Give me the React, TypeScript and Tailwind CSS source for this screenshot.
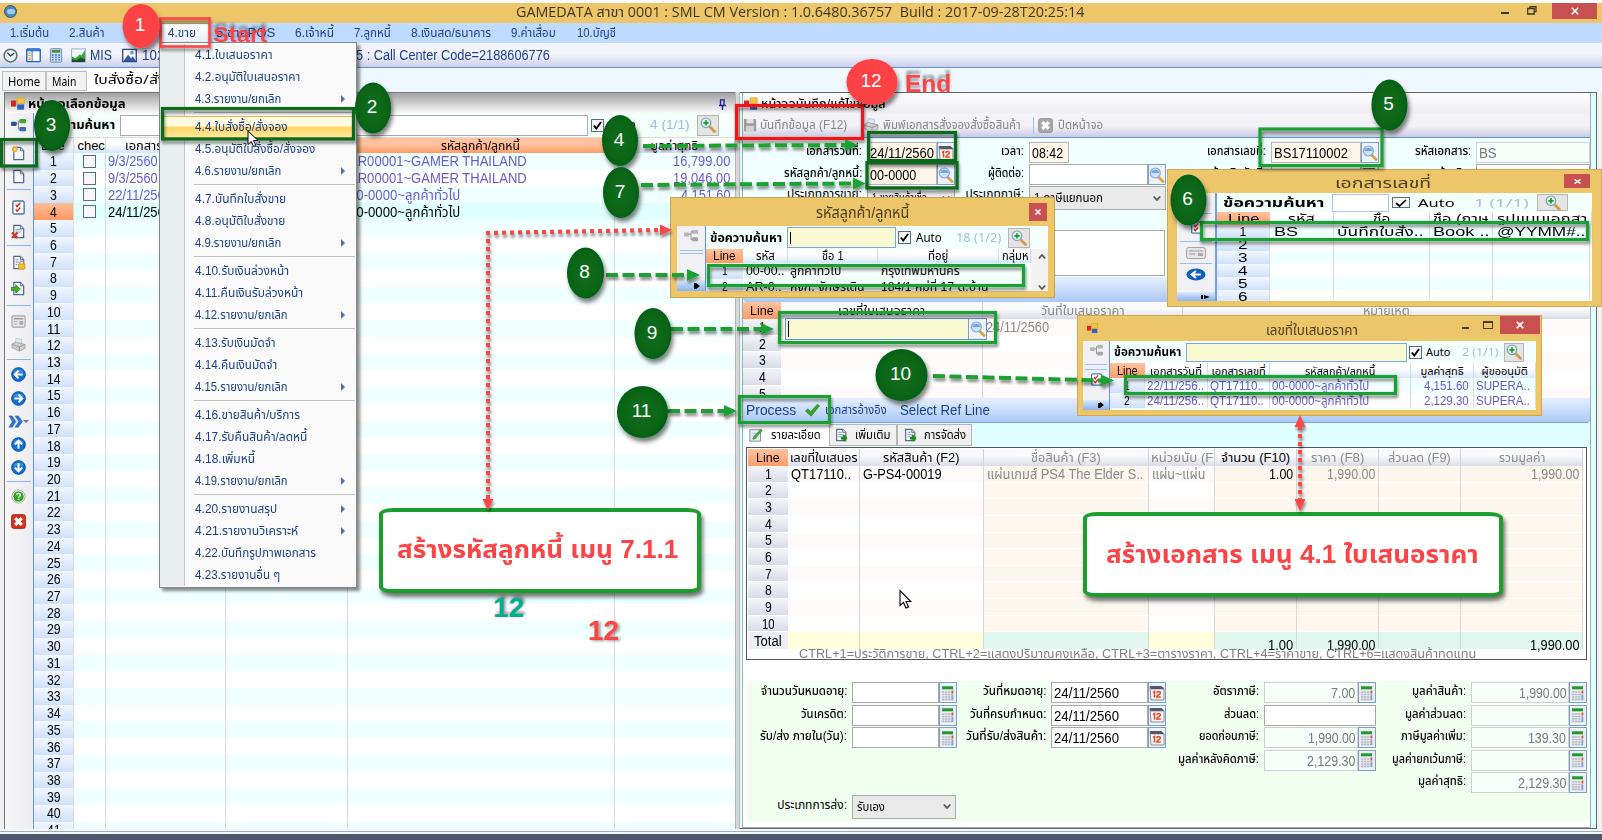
import React, { useLayoutEffect, useRef, useState } from 'react';

type Align = 'l' | 'c' | 'r';

/* Single-line label that is condensed or widened to a given width. */
function Fit({ w, c = '', a = 'l', children }: { w: number; c?: string; a?: Align; children: React.ReactNode }) {
  const ref = useRef<HTMLSpanElement>(null);
  const [s, setS] = useState(1);
  useLayoutEffect(() => {
    if (ref.current && ref.current.offsetWidth) setS(w / ref.current.offsetWidth);
  }, [w, children]);
  return (
    <span className={`inline-flex shrink-0 ${a === 'r' ? 'justify-end' : ''}`} style={{ width: w }}>
      <span
        ref={ref}
        className={`inline-block shrink-0 whitespace-pre leading-[16px] ${a === 'r' ? 'origin-right' : 'origin-left'} ${c}`}
        style={{ transform: `scaleX(${s})` }}
      >
        {children}
      </span>
    </span>
  );
}

/* ---------- icons ---------- */
const Svg = ({ s = 16, children }: { s?: number; children: React.ReactNode }) => (
  <svg width={s} height={s} viewBox="0 0 16 16" className="shrink-0">{children}</svg>
);
const Doc = ({ dim }: { dim?: boolean }) => (
  <>
    <path d="M3 1.5h7l3.5 3.5v9.5H3z" fill="#f4f7fd" stroke={dim ? '#9a9a9a' : '#55698f'} strokeWidth="1.3" />
    <path d="M10 1.5V5h3.5" fill="#cfdaf0" stroke={dim ? '#9a9a9a' : '#55698f'} strokeWidth="1" />
  </>
);
function Icon({ n, s }: { n: string; s?: number }) {
  switch (n) {
    case 'tree':
    case 'treeGray': {
      const g = n === 'treeGray';
      return (
        <Svg s={s}>
          <path d="M5 6h3M8 3v9M8 3h2M8 12h2" stroke="#888" fill="none" />
          <rect x="0" y="4" width="6" height="4.5" rx="1" fill={g ? '#b5b5b5' : '#26539c'} />
          <rect x="9" y="1" width="7" height="4.5" rx="1" fill={g ? '#b5b5b5' : '#3fa72e'} />
          <rect x="9" y="9.5" width="7" height="4.5" rx="1" fill={g ? '#a5a5a5' : '#3b67b4'} />
        </Svg>
      );
    }
    case 'new':
      return <Svg s={s}><Doc /><circle cx="4" cy="3.5" r="3" fill="#ff9d2e" /><circle cx="4" cy="3.5" r="1.3" fill="#ffe27a" /></Svg>;
    case 'doc':
      return <Svg s={s}><Doc /></Svg>;
    case 'check':
      return (
        <Svg s={s}>
          <rect x="2" y="1" width="12" height="14" rx="1.5" fill="#fff" stroke="#4379b8" strokeWidth="1.5" />
          <path d="M5 5l1.5 2L10 3M5 10l1.5 2L10 8" stroke="#d22" strokeWidth="1.5" fill="none" />
        </Svg>
      );
    case 'delete':
      return <Svg s={s}><Doc /><path d="M5 6h6M5 8.5h6" stroke="#7d90b5" /><path d="M1 9l6 6M7 9l-6 6" stroke="#d8341c" strokeWidth="2.4" /></Svg>;
    case 'lock':
      return (
        <Svg s={s}>
          <Doc /><path d="M5 5h3M5 7.5h4M5 10h2" stroke="#7d90b5" />
          <path d="M9.5 10V8.500a2 2 0 0 1 4 0V10" fill="none" stroke="#a88" strokeWidth="1.200" />
          <rect x="8" y="9.500" width="7" height="5.500" rx="1" fill="#f5c21b" stroke="#b8860b" strokeWidth=".6" />
        </Svg>
      );
    case 'export':
      return <Svg s={s}><Doc /><path d="M0 7h5V4l5 4.500-5 4.500v-3H0z" fill="#3db52c" stroke="#237a17" strokeWidth=".7" /></Svg>;
    case 'form':
      return (
        <Svg s={s}>
          <rect x="1" y="2" width="14" height="12" rx="1.500" fill="#e6e6e6" stroke="#a5a5a5" strokeWidth="1.200" />
          <path d="M3 5h10" stroke="#999" strokeWidth="1.500" /><path d="M3 8h4M3 10.500h4" stroke="#aaa" /><rect x="9" y="7.500" width="4" height="4" fill="#aaa" />
        </Svg>
      );
    case 'print':
      return (
        <Svg s={s}>
          <path d="M4 7l1.500-5.500 6 1L11 7z" fill="#dceaf8" stroke="#a9b4c0" strokeWidth=".7" />
          <path d="M1 7.500l4-2 10 2.500v4l-6 3-8-3.500z" fill="#cfcfcf" stroke="#999" strokeWidth=".8" />
          <path d="M1 8l8 2.500 6-2.500M9 10.500V15" stroke="#8a8a8a" strokeWidth=".8" fill="none" />
        </Svg>
      );
    case 'left':
    case 'right':
    case 'up':
    case 'down': {
      const r = n === 'left' ? 0 : n === 'up' ? 90 : n === 'right' ? 180 : 270;
      return (
        <Svg s={s}>
          <circle cx="8" cy="8" r="7.300" fill="#0c6fd6" stroke="#0a489b" strokeWidth="1" />
          <path d="M2.500 6a6 5 0 0 1 11 0z" fill="#4ea3f2" opacity=".7" />
          <path transform={`rotate(${r} 8 8)`} d="M12.500 8H4.500M8 4L4 8l4 4" stroke="#fff" strokeWidth="2.200" fill="none" />
        </Svg>
      );
    }
    case 'help':
      return (
        <Svg s={s}>
          <circle cx="8" cy="8" r="7" fill="#fff" stroke="#a9a9a9" /><circle cx="8" cy="8" r="5.600" fill="#2fa81f" />
          <path d="M6 6.500c0-2.500 4-2.500 4 0 0 1.500-2 1.300-2 2.800M8 10.300v1.400" stroke="#fff" strokeWidth="1.500" fill="none" />
        </Svg>
      );
    case 'exit':
    case 'exitGray':
      return (
        <Svg s={s}>
          <rect x=".7" y=".7" width="14.600" height="14.600" rx="2" fill={n === 'exit' ? '#d9321a' : '#a8a8a8'} stroke={n === 'exit' ? '#a51d0b' : '#909090'} />
          <path d="M4.500 4.500l7 7M11.500 4.500l-7 7" stroke="#fff" strokeWidth="3.400" />
        </Svg>
      );
    case 'clock':
      return (
        <Svg s={s}>
          <circle cx="8" cy="8" r="6.800" fill="#e6f2f5" stroke="#5a6b70" strokeWidth="1.600" />
          <path d="M4.500 5L8 8.500 12 5.500" stroke="#333" strokeWidth="1.300" fill="none" />
        </Svg>
      );
    case 'layout':
      return (
        <Svg s={s}>
          <rect x=".8" y="1" width="14.400" height="13.500" rx="1" fill="#fff" stroke="#1c63c0" strokeWidth="1.500" />
          <path d="M1 2.500h14" stroke="#2878dc" strokeWidth="2" /><path d="M6.500 3v11" stroke="#1c63c0" />
          <path d="M2.500 5.500h2.500M2.500 8h2.500M2.500 10.500h2.500M2.500 12.500h2.500" stroke="#e59a2a" strokeWidth="1.300" />
        </Svg>
      );
    case 'calcBlue':
      return (
        <Svg s={s}>
          <rect x="1.500" y=".7" width="12" height="14.500" rx="1" fill="#c8dcf2" stroke="#6d8db5" />
          <rect x="3" y="2" width="9" height="3" fill="#4b8a52" />
          <path d="M3 7.500h9M3 10h9M3 12.700h9" stroke="#4477b5" strokeWidth="1.500" strokeDasharray="2 1.400" />
        </Svg>
      );
    case 'chart':
      return (
        <Svg s={s}>
          <rect x=".7" y="1" width="14.500" height="14" fill="#f5f9ff" stroke="#8fa5c5" />
          <path d="M1 14V9l4 2 4-4 2 1 4-6v12z" fill="#35ab2d" /><path d="M1 15v-3l5 1 4-3 5 2v3z" fill="#1a4d38" />
        </Svg>
      );
    case 'picture':
      return (
        <Svg s={s}>
          <rect x=".8" y="1.500" width="14.400" height="13" fill="#fff" stroke="#27457f" strokeWidth="1.400" />
          <circle cx="10.500" cy="5" r="2" fill="#5b9ce6" /><path d="M1.500 14l5-7 3 4 2-2 3.500 5z" fill="#2f5ba5" />
        </Svg>
      );
    case 'lens':
      return (
        <Svg s={s}>
          <path d="M10 10.500l4 4" stroke="#e0a33c" strokeWidth="2.800" strokeLinecap="round" />
          <circle cx="6.300" cy="6" r="5" fill="#c9e4fb" stroke="#8fa9d6" strokeWidth="1.200" />
          <path d="M2.200 6a4.200 4.200 0 0 1 8.200 0z" fill="#4f93de" opacity=".75" />
        </Svg>
      );
    case 'zoom':
      return (
        <Svg s={s}>
          <path d="M9.500 9.500l5 5" stroke="#d79a48" strokeWidth="2.800" strokeLinecap="round" />
          <circle cx="6" cy="5.800" r="4.800" fill="#d9f2ea" stroke="#7aa5b5" strokeWidth="1.200" /><path d="M6 3.200v5.200M3.400 5.800h5.200" stroke="#23952b" strokeWidth="1.700" />
        </Svg>
      );
    case 'calc':
      return (
        <Svg s={s}>
          <rect width="16" height="16" fill="#ececf0" /><rect x="2" y="1.300" width="11" height="3" fill="#1f9a2c" />
          <path d="M2 7h11M2 9.500h11M2 12h11M2 14.300h11" stroke="#b4b8c8" strokeWidth="1.700" strokeDasharray="2.400 .6" /><path d="M12.500 5.500v3" stroke="#e3502f" strokeWidth="1.600" /><path d="M12.500 10v5" stroke="#7fa3dd" strokeWidth="1.600" />
        </Svg>
      );
    case 'cal':
      return (
        <Svg s={s}>
          <path d="M1 1.500h11l3 2V15H2z" fill="#f7f4f4" stroke="#8b8b95" /><path d="M.8 1h11.500l3 3.300H1.500z" fill="#54586a" />
          <path d="M4 7.500l1.500-1v6M7.800 8c0-2 3.600-2 3.600 0 0 1.500-3.400 2-3.600 4h4" stroke="#f0461c" strokeWidth="1.500" fill="none" />
        </Svg>
      );
    case 'app':
      return (
        <Svg s={s}>
          <rect x="7" y="1" width="8" height="6.500" fill="#f6c33a" stroke="#c8921a" strokeWidth=".6" /><rect x="7" y="8.500" width="8" height="6" fill="#2f62c8" /><rect x="0" y="4" width="6" height="7" fill="#d5291f" />
        </Svg>
      );
    case 'save':
      return <Svg s={s}><path d="M1 1h13l1 1v13H1z" fill="#9c9c9c" /><rect x="4" y="1" width="8" height="5" fill="#e3e3e3" /><rect x="3.500" y="9" width="9" height="6" fill="#d3d3d3" /></Svg>;
    case 'edit':
      return <Svg s={s}><rect x="1" y="2" width="12" height="13" fill="#eef3fb" stroke="#6580a8" /><path d="M3 6h6M3 9h5M3 12h6" stroke="#9fb3d0" /><path d="M13.500 1L15 3 7 12l-2.500 1L5.500 10z" fill="#38b12f" stroke="#1c7514" strokeWidth=".6" /></Svg>;
    case 'add':
      return <Svg s={s}><Doc /><path d="M5 5h4M5 7.500h6M5 10h3" stroke="#8ea3c8" /><path d="M11.500 8v7M8 11.500h7" stroke="#1c8f14" strokeWidth="3" /></Svg>;
    case 'tick':
      return <Svg s={s}><path d="M.5 8.500L3 6l3 3.500L13 1.500l2.500 1.500L6.500 14z" fill="#34a524" stroke="#1f7a14" strokeWidth=".7" /></Svg>;
    case 'ff':
      return <Svg s={s}><path d="M1 2h3.500l4 6-4 6H1l3.500-6zM7.500 2H11l4.500 6-4.500 6H7.500l4-6z" fill="#2b78d0" stroke="#1a529a" strokeWidth=".5" /></Svg>;
    default:
      return null;
  }
}

const TitleIcon = () => <Icon n="app" s={14} />;

/* ---------- menu bar ---------- */
const menus: [string, number, number][] = [
  ['1.เริ่มต้น', 59, 39], ['2.สินค้า', 59, 36], ['3.', 40, 10], ['4.ขาย', 48, 28], ['5.ขายPOS', 79, 59],
  ['6.เจ้าหนี้', 59, 39], ['7.ลูกหนี้', 57, 37], ['8.เงินสด/ธนาคาร', 100, 80], ['9.ค่าเสื่อม', 66, 45], ['10.บัญชี', 50, 39],
];

const dropItems: (null | [string, number, boolean?])[] = [
  ['4.1.ใบเสนอราคา', 78], ['4.2.อนุมัติใบเสนอราคา', 105], ['4.3.รายงาน/ยกเลิก', 86, true], null,
  ['4.4.ใบสั่งซื้อ/สั่งจอง', 93], ['4.5.อนุมัติใบสั่งซื้อ/สั่งจอง', 120], ['4.6.รายงาน/ยกเลิก', 86, true], null,
  ['4.7.บันทึกใบสั่งขาย', 91], ['4.8.อนุมัติใบสั่งขาย', 90], ['4.9.รายงาน/ยกเลิก', 86, true], null,
  ['4.10.รับเงินล่วงหน้า', 94], ['4.11.คืนเงินรับล่วงหน้า', 108], ['4.12.รายงาน/ยกเลิก', 93, true], null,
  ['4.13.รับเงินมัดจำ', 81], ['4.14.คืนเงินมัดจำ', 82], ['4.15.รายงาน/ยกเลิก', 93, true], null,
  ['4.16.ขายสินค้า/บริการ', 105], ['4.17.รับคืนสินค้า/ลดหนี้', 112], ['4.18.เพิ่มหนี้', 60], ['4.19.รายงาน/ยกเลิก', 93, true], null,
  ['4.20.รายงานสรุป', 82, true], ['4.21.รายงานวิเคราะห์', 103, true], ['4.22.บันทึกรูปภาพเอกสาร', 121], ['4.23.รายงานอื่น ๆ', 85],
];

function DropMenu() {
  return (
    <div className="absolute left-[159px] top-[42px] w-[198px] border border-[#868686] bg-[#fafafa] py-px text-[13px] text-[#1c3f8c] shadow-[3px_3px_3px_rgba(0,0,0,0.45)]">
      {dropItems.map((it, i) =>
        it === null ? (
          <div key={i} className="flex h-[6px]">
            <div className="w-[25px] border-r border-[#c5c5c5] bg-[#e9eeee]" />
            <div className="ml-[9px] mr-px mt-[2px] h-px flex-1 bg-[#c0c0c0]" />
          </div>
        ) : (
          <div key={i} className="flex h-[22px]">
            <div className="w-[25px] border-r border-[#c5c5c5] bg-[#e9eeee]" />
            <div className={`relative flex flex-1 items-center pl-[10px] ${i === 4 ? '-ml-[22px] mr-px border border-[#e3b84e] bg-linear-to-b from-[#fffbe0] from-45% via-[#ffd564] via-50% to-[#ffe79b] pl-[31px]!' : ''}`}>
              <Fit w={it[1]}>{it[0]}</Fit>
              {it[2] && <div className="ml-auto mr-[11px] border-y-[4px] border-l-[4px] border-y-transparent border-l-[#5a6db0]" />}
            </div>
          </div>
        ),
      )}
    </div>
  );
}

/* ---------- left list ---------- */
const sideIcons: (string | null)[] = ['tree', 'new', 'doc', null, 'check', 'delete', null, 'lock', 'export', null, 'form', 'print', null, 'left', 'right', 'ff', 'up', 'down', null, 'help', 'exit'];
const sideH = ['h-[24px]', 'h-[32px]', 'h-[15px]', 'h-[11px]', 'h-[24px]', 'h-[24px]', 'h-[5px]', 'h-[28px]', 'h-[24px]', 'h-[10px]', 'h-[22px]', 'h-[24px]', 'h-[6px]', 'h-[25px]', 'h-[23px]', 'h-[23px]', 'h-[23px]', 'h-[23px]', 'h-[5px]', 'h-[25px]', 'h-[24px]'];

const listRows: [string, number, string, number, string, number][] = [
  ['9/3/2560', 50, 'AR00001~GAMER THAILAND', 178, '16,799.00', 57],
  ['9/3/2560', 50, 'AR00001~GAMER THAILAND', 178, '19,046.00', 57],
  ['22/11/2560', 64, '00-0000~ลูกค้าทั่วไป', 111, '4,151.60', 50],
  ['24/11/2560', 64, '00-0000~ลูกค้าทั่วไป', 111, '', 0],
];

const Check = ({ on }: { on?: boolean }) => (
  <div className="flex h-[13px] w-[13px] items-center justify-center border border-[#5a6b85] bg-[#f7f7f7]">
    {on && <svg width="9" height="9" viewBox="0 0 9 9"><path d="M.8 4.500l2.500 3L8 1" stroke="#000" strokeWidth="1.900" fill="none" /></svg>}
  </div>
);
const ZoomBtn = ({ c = 'h-[21px] w-[22px]' }: { c?: string }) => (
  <div className={`flex items-center justify-center border border-[#b5b5b5] bg-[#e4e4e4] ${c}`}><Icon n="zoom" s={16} /></div>
);

function LeftPanel() {
  return (
    <div className="flex w-[734px] flex-col overflow-hidden border-l border-t border-[#777] bg-white">
      <div className="flex h-[20px] shrink-0 items-center bg-linear-to-b from-[#a2a2a2] to-[#fafafa] pl-[6px] pt-[2px]">
        <TitleIcon />
        <div className="w-[3px]" />
        <Fit w={98} c="text-[13px] font-bold text-black">หน้าจอเลือกข้อมูล</Fit>
        <div className="ml-auto mr-[8px]">
          <svg width="9" height="11" viewBox="0 0 9 11"><path d="M2 .8h5M2.500 1v5.500M6 1v5.500M1 6.500h7M4.500 7v4" stroke="#1c1c9c" strokeWidth="1.300" fill="none" /></svg>
        </div>
      </div>
      <div className="flex min-h-0 flex-1">
        <div className="flex w-[29px] shrink-0 flex-col items-center border-r border-[#6593cf] bg-linear-to-r from-[#f7f7f9] to-[#ececf1] pr-[1px]">
          {sideIcons.map((n, i) =>
            n === null ? (
              <div key={i} className={`flex w-[24px] items-center ${sideH[i]}`}><div className="h-px w-full bg-[#8db5ea]" /></div>
            ) : (
              <div key={i} className={`flex items-center ${sideH[i]}`}>
                <Icon n={n} s={15} />
                {n === 'ff' && <div className="border-x-[3px] border-t-[3px] border-x-transparent border-t-[#5a6db0]" />}
              </div>
            ),
          )}
        </div>
        <div className="flex flex-1 flex-col overflow-hidden">
          <div className="flex h-[24px] shrink-0 items-center bg-[#f5fffa]">
            <div className="w-[6px]" />
            <Fit w={75} c="text-[13px] font-bold text-black">ข้อความค้นหา</Fit>
            <div className="ml-[5px] h-[21px] w-[468px] border border-[#a9a9a9] bg-white" />
            <div className="ml-[3px] flex items-center gap-[5px]"><Check on /><Fit w={27} c="text-[12px]">Auto</Fit></div>
            <div className="w-[14px]" />
            <Fit w={40} c="text-[13px] text-[#9db9dd]">4 (1/1)</Fit>
            <div className="w-[7px]" />
            <ZoomBtn />
          </div>
          <div className="flex h-[16px] shrink-0 border-t border-[#ddd] text-[12px] *:flex *:items-center *:justify-center *:border-r *:border-[#d0d8e6] *:bg-linear-to-b *:from-white *:from-40% *:to-[#d6e4f8]">
            <div className="w-[40px]"><Fit w={24} c="text-[13px]">Line</Fit></div>
            <div className="w-[32px] pl-[3px]"><Fit w={27} c="text-[13px]">chec</Fit></div>
            <div className="w-[120px] pr-[20px]"><Fit w={60}>เอกสารวันที่</Fit></div>
            <div className="w-[122px]"><Fit w={60}>เอกสารเลขที่</Fit></div>
            <div className="w-[267px] from-[#ffc29e]! to-[#ff9c68]!"><Fit w={79}>รหัสลูกค้า/ลูกหนี้</Fit></div>
            <div className="w-[121px]"><Fit w={47}>มูลค่าสุทธิ</Fit></div>
          </div>
          {Array.from({ length: 41 }, (_, i) => {
            const r = listRows[i];
            return (
              <div key={i} className={`flex h-[16.720px] shrink-0 items-center text-[14px] ${i % 2 ? 'bg-white' : 'bg-[#f0ffff]'} ${i === 3 ? 'bg-[#e0ffff]! text-black' : 'text-[#6a5acd]'} *:h-full *:items-center *:flex *:shrink-0 *:border-r *:border-[#dcdcdc]`}>
                <div className={`w-[40px] justify-center bg-linear-to-b text-black ${i === 3 ? 'from-[#ffbe98] to-[#ff9862]' : 'from-[#f2f7ff] to-[#cfe1fa]'}`}><Fit w={i < 9 ? 7 : 14}>{i + 1}</Fit></div>
                <div className="w-[32px] justify-center">{r && <Check />}</div>
                <div className="w-[120px] pl-[2px]">{r && <Fit w={r[1]}>{r[0]}</Fit>}</div>
                <div className="w-[122px]" />
                <div className="w-[267px] pl-px">{r && <Fit w={r[3]}>{r[2]}</Fit>}</div>
                <div className="w-[121px] justify-end pr-[5px]">{r && r[4] && <Fit w={r[5]} a="r">{r[4]}</Fit>}</div>
              </div>
            );
          })}
        </div>
      </div>
    </div>
  );
}

/* ---------- form pieces ---------- */
type FieldProps = { lw: number; label: string; tw: number; fw: string; v?: string; vw?: number; icon?: string; kind?: string; right?: boolean; ic?: string };
function Field({ lw, label, tw, fw, v, vw = 0, icon, kind = 'bg-white border-[#a9a9a9]', right, ic = 'border-[#7b9fc9]' }: FieldProps) {
  return (
    <div className="flex h-[21px] shrink-0">
      <div className="flex shrink-0 items-start justify-end pt-[1px]" style={{ width: lw }}><Fit w={tw} a="r" c="text-[12px] font-medium text-black">{label}</Fit></div>
      <div className={`ml-[5px] flex items-center border px-[2px] pt-[1px] text-[14px] ${right ? 'justify-end' : ''} ${fw} ${kind}`}>
        {v && <Fit w={vw} a={right ? 'r' : 'l'}>{v}</Fit>}
      </div>
      {icon && <div className={`flex w-[18px] items-center justify-center border bg-[#eef3fa] ${ic}`}><Icon n={icon} s={16} /></div>}
    </div>
  );
}
const Chevron = () => <svg width="8" height="7" viewBox="0 0 8 7" className="mr-[4px]"><path d="M.8 1.500L4 5l3.200-3.500" stroke="#555" strokeWidth="1.800" fill="none" /></svg>;
const Select = ({ w, tw, children, c = 'h-[24px]' }: { w: string; tw: number; children: string; c?: string }) => (
  <div className={`ml-[5px] flex items-center justify-between border border-[#acacac] bg-[#e9e9e9] pl-[4px] text-[12px] ${w} ${c}`}><Fit w={tw}>{children}</Fit><Chevron /></div>
);

const beige = 'bg-[#fff5e8] border-[#b5b5b5]';
const ro = 'bg-[#f7fffa] border-[#d0d0d0] text-[#7a7a7a]';
const soft = 'border-[#7f9fc6]';

function TopForm() {
  return (
    <div className="h-[139px] overflow-hidden bg-[#f0ffff] pt-[4px]">
      <div className="flex">
        <Field lw={119} tw={56} label="เอกสารวันที่:" fw="w-[70px]" v="24/11/2560" vw={64} icon="cal" kind={beige} ic={soft} />
        <Field lw={69} tw={23} label="เวลา:" fw="w-[40px]" v="08:42" vw={31} kind={beige} />
        <Field lw={197} tw={59} label="เอกสารเลขที่:" fw="w-[90px]" v="BS17110002" vw={74} icon="lens" kind={beige} ic={soft} />
        <Field lw={92} tw={56} label="รหัสเอกสาร:" fw="w-[114px]" v="BS" vw={18} kind={ro} />
      </div>
      <div className="mt-[1px] flex">
        <Field lw={119} tw={78} label="รหัสลูกค้า/ลูกหนี้:" fw="w-[70px]" v="00-0000" vw={46} icon="lens" kind={beige} ic={soft} />
        <Field lw={69} tw={36} label="ผู้ติดต่อ:" fw="w-[119px]" icon="lens" />
        <Field lw={100} tw={54} label="อ้างอิงวันที่:" fw="w-[90px]" icon="cal" />
        <Field lw={92} tw={32} label="อ้างอิง:" fw="w-[114px]" />
      </div>
      <div className="mt-[1px] flex">
        <div className="flex w-[119px] shrink-0 justify-end"><Fit w={75} a="r" c="text-[12px]">ประเภทการขาย:</Fit></div>
        <Select w="w-[88px]" tw={55}>1.ขายสินค้าเชื่อ</Select>
        <div className="flex w-[69px] shrink-0 justify-end"><Fit w={58} a="r" c="text-[12px]">ประเภทภาษี:</Fit></div>
        <Select w="w-[137px]" tw={69}>1.ภาษีแยกนอก</Select>
      </div>
      <div className="ml-[122px] mt-[20px] h-[46px] w-[300px] border border-[#a9a9a9] bg-white" />
    </div>
  );
}

const bar = 'bg-linear-to-b from-[#e3efff] via-[#c8ddfb] to-[#a9c9f5]';

function BottomForm() {
  return (
    <div className="flex h-[141px] items-start bg-[#f0fff0] text-black">
      <div className="flex w-[212px] flex-col gap-[1.500px] pt-[1px]">
        <Field lw={100} tw={86} label="จำนวนวันหมดอายุ:" fw="w-[87px]" icon="calc" />
        <Field lw={100} tw={46} label="วันเครดิต:" fw="w-[87px]" icon="calc" />
        <Field lw={100} tw={87} label="รับ/ส่ง ภายใน(วัน):" fw="w-[87px]" icon="calc" />
        <div className="mt-[45px] flex">
          <div className="flex w-[100px] shrink-0 justify-end pt-[2px]"><Fit w={70} a="r" c="text-[12px]">ประเภทการส่ง:</Fit></div>
          <Select w="w-[104px]" tw={28}>รับเอง</Select>
        </div>
      </div>
      <div className="flex w-[210px] flex-col gap-[1.500px] pt-[1px]">
        <Field lw={87} tw={63} label="วันที่หมดอายุ:" fw="w-[97px]" v="24/11/2560" vw={65} icon="cal" />
        <Field lw={87} tw={76} label="วันที่ครบกำหนด:" fw="w-[97px]" v="24/11/2560" vw={65} icon="cal" />
        <Field lw={87} tw={80} label="วันที่รับ/ส่งสินค้า:" fw="w-[97px]" v="24/11/2560" vw={65} icon="cal" />
      </div>
      <div className="flex w-[211px] flex-col gap-[1.500px] pt-[1px]">
        <Field lw={90} tw={46} label="อัตราภาษี:" fw="w-[94px]" v="7.00" vw={24} icon="calc" kind={ro} right />
        <Field lw={90} tw={35} label="ส่วนลด:" fw="w-[112px]" />
        <Field lw={90} tw={60} label="ยอดก่อนภาษี:" fw="w-[94px]" v="1,990.00" vw={48} icon="calc" kind={ro} right />
        <Field lw={90} tw={81} label="มูลค่าหลังคิดภาษี:" fw="w-[94px]" v="2,129.30" vw={49} icon="calc" kind={ro} right />
      </div>
      <div className="flex flex-1 flex-col gap-[1.500px] pt-[1px]">
        <Field lw={86} tw={54} label="มูลค่าสินค้า:" fw="w-[98px]" v="1,990.00" vw={48} icon="calc" kind={ro} right />
        <Field lw={86} tw={61} label="มูลค่าส่วนลด:" fw="w-[98px]" icon="calc" kind={ro} />
        <Field lw={86} tw={65} label="ภาษีมูลค่าเพิ่ม:" fw="w-[98px]" v="139.30" vw={38} icon="calc" kind={ro} right />
        <Field lw={86} tw={74} label="มูลค่ายกเว้นภาษี:" fw="w-[98px]" icon="calc" kind={ro} />
        <Field lw={86} tw={48} label="มูลค่าสุทธิ:" fw="w-[98px]" v="2,129.30" vw={49} icon="calc" kind={ro} right />
      </div>
    </div>
  );
}

type Col = { w: string; h: string; hw: number; dim?: boolean; v?: string; vw?: number; r?: boolean; tint?: boolean; total?: string; totalW?: number };
const itemCols: Col[] = [
  { w: 'w-[72px]', h: 'เลขที่ใบเสนอร', hw: 68, v: 'QT17110..', vw: 60 },
  { w: 'w-[124px]', h: 'รหัสสินค้า (F2)', hw: 77, v: 'G-PS4-00019', vw: 79 },
  { w: 'w-[165px]', h: 'ชื่อสินค้า (F3)', hw: 70, dim: true, v: 'แผ่นเกมส์ PS4 The Elder S..', vw: 156, tint: true },
  { w: 'w-[66px]', h: 'หน่วยนับ (F', hw: 62, dim: true, v: 'แผ่น~แผ่น', vw: 53 },
  { w: 'w-[82px]', h: 'จำนวน (F10)', hw: 69, v: '1.00', vw: 24, r: true, tint: true, total: '1.00', totalW: 25 },
  { w: 'w-[82px]', h: 'ราคา (F8)', hw: 53, dim: true, v: '1,990.00', vw: 49, r: true, tint: true, total: '1,990.00', totalW: 49 },
  { w: 'w-[82px]', h: 'ส่วนลด (F9)', hw: 63, dim: true, tint: true },
  { w: 'w-[122px]', h: 'รวมมูลค่า', hw: 46, dim: true, v: '1,990.00', vw: 49, r: true, tint: true, total: '1,990.00', totalW: 50 },
];
const greyHead = 'bg-linear-to-b from-[#fbfbfc] from-40% to-[#d9dce8]';
const greyNum = 'flex h-full shrink-0 items-center justify-center border-b border-[#fff] bg-linear-to-b from-[#f4f5f8] to-[#d8dce8] text-black';

function ItemGrid() {
  return (
    <div className="ml-[3px] flex h-[213px] w-[841px] flex-col overflow-hidden border border-[#555] bg-white pl-px pt-px text-[14px]">
      <div className="flex h-[17px] shrink-0">
        <div className="flex w-[40px] items-center justify-center bg-linear-to-b from-[#ffc29e] to-[#ff9c68] text-black"><Fit w={24} c="text-[13px]">Line</Fit></div>
        {itemCols.map((c) => (
          <div key={c.h} className={`flex shrink-0 items-center justify-center overflow-hidden border-r border-[#cfd2da] text-[13px] ${greyHead} ${c.w} ${c.dim ? 'text-[#8a8a8a]' : 'text-black'}`}><Fit w={c.hw}>{c.h}</Fit></div>
        ))}
      </div>
      {Array.from({ length: 10 }, (_, i) => (
        <div key={i} className="flex h-[16.650px] shrink-0">
          <div className={`w-[40px] ${greyNum}`}><Fit w={i === 9 ? 13 : 7}>{i + 1}</Fit></div>
          {itemCols.map((c) => (
            <div key={c.h} className={`flex shrink-0 items-center overflow-hidden border-r border-[#d8d8d8] px-[3px] ${c.w} ${c.r ? 'justify-end' : ''} ${c.dim ? 'text-[#8a8a8a]' : 'text-black'} ${c.tint ? (i % 2 ? 'bg-[#fff6ee]' : 'bg-[#fbf7ef]') : i % 2 ? 'bg-white' : 'bg-[#fffafa]'} ${c.tint ? 'border-b border-b-white' : ''}`}>
              {i === 0 && c.v && <Fit w={c.vw!} a={c.r ? 'r' : 'l'}>{c.v}</Fit>}
            </div>
          ))}
        </div>
      ))}
      <div className="flex h-[17px] shrink-0">
        <div className="flex w-[40px] items-center justify-center bg-[#eceef4]"><Fit w={28}>Total</Fit></div>
        {itemCols.map((c) => (
          <div key={c.h} className={`flex shrink-0 items-center justify-end border-r border-[#d8d8d8] px-[3px] pt-[8px] text-black ${c.w} ${c.tint ? 'bg-[#dff7ee]' : 'bg-[#ffffdc]'}`}>
            {c.total && <Fit w={c.totalW!} a="r">{c.total}</Fit>}
          </div>
        ))}
      </div>
      <div className="flex h-[10px] shrink-0 items-center">
        <div className="w-[51px]" />
        <Fit w={677} c="text-[13px] text-[#808080]">CTRL+1=ประวัติการขาย, CTRL+2=แสดงปริมาณคงเหลือ, CTRL+3=ตารางราคา, CTRL+4=ราคาขาย, CTRL+6=แสดงสินค้าทดแทน</Fit>
      </div>
    </div>
  );
}

function RightPanel() {
  return (
    <div className="flex flex-1 flex-col border-b border-r border-t border-[#666] bg-[#d9ffff] pl-[2px] pr-[5px]">
      <div className="flex flex-1 flex-col overflow-hidden border-x border-b border-[#a9a9a9] bg-white">
        <div className="flex h-[20px] shrink-0 items-center bg-linear-to-b from-[#fdfdfd] to-[#efeff3] pl-[1px] pt-[2px]">
          <TitleIcon />
          <div className="w-[3px]" />
          <Fit w={125} c="text-[13px] font-medium text-black">หน้าจอบันทึก/แก้ไขข้อมูล</Fit>
        </div>
        <div className="flex h-[25px] shrink-0 items-center border-b border-[#6593cf] bg-linear-to-b from-[#f2f2f7] from-55% to-[#cbcbe2] text-[13px] text-[#868686]">
          <Icon n="save" s={14} />
          <div className="w-[3px]" /><Fit w={87}>บันทึกข้อมูล (F12)</Fit><div className="w-[16px]" />
          <Icon n="print" /><div className="w-[4px]" /><Fit w={138}>พิมพ์เอกสารสั่งจองสั่งซื้อสินค้า</Fit>
          <div className="ml-[12px] mr-[4px] h-[17px] w-px bg-[#a9c5ee]" />
          <Icon n="exitGray" s={15} /><div className="w-[5px]" /><Fit w={45}>ปิดหน้าจอ</Fit>
        </div>
        <TopForm />
        <div className={`h-[25px] shrink-0 rounded-bl-sm ${bar}`} />
        <div className="flex h-[96px] shrink-0 flex-col overflow-hidden text-[14px]">
          <div className="flex h-[17px] shrink-0 text-[12px]">
            <div className="flex w-[38px] items-center justify-center bg-linear-to-b from-[#ffc29e] to-[#ff9c68]"><Fit w={24} c="text-[13px]">Line</Fit></div>
            <div className={`flex w-[202px] items-center justify-center border-r border-[#cfd2da] ${greyHead}`}><Fit w={87}>เลขที่ใบเสนอราคา</Fit></div>
            <div className={`flex w-[200px] items-center justify-center border-r border-[#cfd2da] text-[#888] ${greyHead}`}><Fit w={84}>วันที่ใบเสนอราคา</Fit></div>
            <div className={`flex flex-1 items-center justify-center text-[#888] ${greyHead}`}><Fit w={47}>หมายเหตุ</Fit></div>
          </div>
          {[1, 2, 3, 4, 5].map((n) => (
            <div key={n} className={`flex h-[16.700px] shrink-0 items-center ${n % 2 ? 'bg-[#fffafa]' : 'bg-white'}`}>
              <div className={`w-[38px] ${greyNum}`}><Fit w={7}>{n}</Fit></div>
              <div className="h-full w-[202px] border-r border-[#d8d8d8]" />
              <div className="flex h-full w-[200px] items-center border-r border-[#e5e5e5] pl-[3px]">{n === 1 && <Fit w={63} c="text-[#8a8a8a]">24/11/2560</Fit>}</div>
            </div>
          ))}
        </div>
        <div className={`flex h-[25px] shrink-0 items-center rounded-b-sm border-b border-[#7ba3dd] text-[15px] text-[#1c3f8c] ${bar}`}>
          <div className="w-[3px]" /><Fit w={50}>Process</Fit><div className="w-[9px]" /><Icon n="tick" s={15} />
          <div className="w-[5px]" /><Fit w={62} c="text-[12px]">เอกสารอ้างอิง</Fit><div className="w-[13px]" /><Fit w={90}>Select Ref Line</Fit>
        </div>
        <div className="flex h-[24px] shrink-0 items-end bg-[#e0ffff] pl-[2px] text-[12px]">
          <div className="flex h-[24px] w-[84px] items-center gap-[8px] bg-white pl-[4px]"><Icon n="edit" s={14} /><Fit w={50}>รายละเอียด</Fit></div>
          <div className="mb-px flex h-[22px] w-[68px] items-center gap-[7px] border border-[#b5b5b5] bg-[#f0f0f0] pl-[4px]"><Icon n="add" s={14} /><Fit w={35}>เพิ่มเติม</Fit></div>
          <div className="mb-px flex h-[22px] w-[75px] items-center gap-[7px] border border-[#b5b5b5] bg-[#f0f0f0] pl-[5px]"><Icon n="add" s={14} /><Fit w={42}>การจัดส่ง</Fit></div>
        </div>
        <ItemGrid />
        <div className="h-[21px] shrink-0" />
        <div className="pl-[4px]"><BottomForm /></div>
      </div>
    </div>
  );
}

/* ---------- floating dialogs ---------- */
const lineHead = 'flex items-center justify-center bg-linear-to-b from-[#ffc29e] to-[#ff9c68]';
const blueHead = 'flex items-center justify-center overflow-hidden border-r border-[#d0dae8] bg-linear-to-b from-white from-40% to-[#d6e6fa]';
const blueNum = 'flex shrink-0 items-center justify-center bg-linear-to-b from-[#f2f7ff] to-[#cfe1fa]';

function CustomerDialog() {
  return (
    <div className="absolute left-[670px] top-[197px] flex h-[101px] w-[385px] flex-col border border-[#c9a24a] bg-[#edc669] px-[6px] pb-[6px]">
      <div className="flex h-[28px] shrink-0 items-start">
        <div className="w-[139px]" />
        <div className="pt-[3px]"><Fit w={93} c="text-[15px] text-[#4b3f20]">รหัสลูกค้า/ลูกหนี้</Fit></div>
        <div className="ml-auto mr-px mt-[5px] flex h-[18px] w-[18px] items-center justify-center bg-[#c75050]"><svg width="6" height="6" viewBox="0 0 6 6"><path d="M.5.5l5 5M5.500.5l-5 5" stroke="#fff" strokeWidth="1.500" /></svg></div>
      </div>
      <div className="flex min-h-0 flex-1 overflow-hidden bg-[#f3fffc]">
        <div className="flex w-[29px] shrink-0 flex-col items-center border-r border-[#6593cf] bg-[#f0f0f5] pt-[3px]">
          <Icon n="treeGray" s={14} />
          <div className="mt-[7px] h-[4px] w-[23px] border-y border-[#9cc0ee]" />
          <div className="mt-auto flex h-[11px] w-full items-center justify-end bg-linear-to-b from-[#dbe9fc] to-[#8cb4ec] pr-[5px]"><div className="h-[6px] w-[2px] bg-black" /><div className="border-y-[3px] border-l-[4px] border-y-transparent border-l-black" /></div>
        </div>
        <div className="flex flex-1 flex-col">
          <div className="flex h-[23px] shrink-0 items-center">
            <div className="w-[4px]" />
            <Fit w={72} c="text-[13px] font-bold text-black">ข้อความค้นหา</Fit>
            <div className="ml-[5px] flex h-[21px] w-[109px] items-center border border-[#7aa7de] bg-[#fafad2] pl-[2px]"><div className="h-[12px] w-px bg-black" /></div>
            <div className="w-[2px]" /><Check on /><div className="w-[5px]" />
            <Fit w={26} c="font-[Noto_Sans] text-[12px]">Auto</Fit><div className="w-[14px]" />
            <Fit w={45} c="font-[Noto_Sans] text-[12px] text-[#a9c0dd]">18 (1/2)</Fit><div className="w-[7px]" /><ZoomBtn c="h-[20px] w-[22px]" />
          </div>
          <div className="flex flex-1">
            <div className="flex flex-1 flex-col overflow-hidden text-[12px] text-black">
              <div className="flex h-[14px] shrink-0">
                <div className={`w-[37px] ${lineHead}`}><Fit w={23} c="text-[13px]">Line</Fit></div>
                <div className={`w-[45px] ${blueHead}`}><Fit w={19}>รหัส</Fit></div>
                <div className={`w-[90px] ${blueHead}`}><Fit w={22}>ชื่อ 1</Fit></div>
                <div className={`w-[121px] ${blueHead}`}><Fit w={20}>ที่อยู่</Fit></div>
                <div className={`w-[32px] ${blueHead}`}><Fit w={26}>กลุ่มห</Fit></div>
              </div>
              {[['1', '00-00..', 38, 'ลูกค้าทั่วไป', 51, 'กรุงเทพมหานคร', 79], ['2', 'AR-0..', 36, 'หจก. จักษรเดิน', 75, '184/1 หมู่ที่ 17 ต.บ้าน', 108]].map((r, i) => (
                <div key={i} className="flex h-[16px] shrink-0 items-center">
                  <div className={`h-full w-[37px] ${blueNum}`}><Fit w={6}>{r[0]}</Fit></div>
                  <div className="flex w-[45px] pl-[3px]"><Fit w={r[2] as number} c="text-[13px]">{r[1]}</Fit></div>
                  <div className="flex w-[90px] pl-[2px]"><Fit w={r[4] as number}>{r[3]}</Fit></div>
                  <div className="flex w-[121px] pl-[3px]"><Fit w={r[6] as number}>{r[5]}</Fit></div>
                </div>
              ))}
            </div>
            <div className="flex w-[17px] flex-col items-center justify-between bg-[#f2f2f2] py-[4px] pl-[4px]">
              <svg width="8" height="7" viewBox="0 0 8 7"><path d="M.8 5.500L4 2l3.200 3.500" stroke="#555" strokeWidth="1.800" fill="none" /></svg>
              <svg width="8" height="7" viewBox="0 0 8 7"><path d="M.8 1.500L4 5l3.200-3.500" stroke="#555" strokeWidth="1.800" fill="none" /></svg>
            </div>
          </div>
        </div>
      </div>
    </div>
  );
}

function DocNoDialog() {
  return (
    <div className="absolute left-[1167px] top-[169px] flex h-[138px] w-[435px] flex-col border border-[#d0a850] bg-[#edc669] px-[9px] pb-[5px]">
      <div className="flex h-[23px] shrink-0">
        <div className="w-[158px]" />
        <div className="pt-[1px]"><Fit w={96} c="text-[14px] text-[#4b3f20]">เอกสารเลขที่</Fit></div>
        <div className="ml-auto mr-[2px] mt-[4px] flex h-[14px] w-[26px] items-center justify-center bg-[#c75050]"><svg width="7" height="5" viewBox="0 0 7 5"><path d="M.5.5l6 4M6.500.5l-6 4" stroke="#fff" strokeWidth="1.500" /></svg></div>
      </div>
      <div className="flex min-h-0 flex-1 overflow-hidden bg-[#f3fffc]">
        <div className="flex w-[40px] shrink-0 flex-col items-center border-r-2 border-[#6fa0e0] bg-[#f0f0f5]">
          <div className="h-[20px]" />
          <div className="h-px w-[32px] bg-[#9cc0ee]" />
          <div className="flex h-[27px] items-center"><Icon n="check" s={13} /></div>
          <div className="h-px w-[32px] bg-[#9cc0ee]" />
          <div className="flex h-[21px] items-center"><svg width="20" height="12" viewBox="0 0 20 12"><rect x=".5" y=".5" width="19" height="11" rx="2" fill="#e6e6e6" stroke="#a5a5a5" /><path d="M3 4h14M3 7h6" stroke="#999" /><rect x="12" y="6" width="5" height="3" fill="#aaa" /></svg></div>
          <div className="h-px w-[32px] bg-[#9cc0ee]" />
          <div className="flex h-[20px] items-center"><svg width="20" height="13" viewBox="0 0 20 13"><ellipse cx="10" cy="6.500" rx="9.500" ry="6" fill="#0c5fc0" /><path d="M15 6.500H6M10 3L5.500 6.500 10 10" stroke="#fff" strokeWidth="2" fill="none" /></svg></div>
          <div className="mt-auto flex h-[9px] w-full items-center justify-end gap-px bg-linear-to-b from-[#dbe9fc] to-[#8cb4ec] pr-[5px]"><div className="h-[4px] w-[2px] bg-black" /><div className="border-y-[2px] border-l-[6px] border-y-transparent border-l-black" /></div>
        </div>
        <div className="flex flex-1 flex-col">
          <div className="flex h-[19px] shrink-0 items-center">
            <div className="w-[6px]" /><Fit w={101} c="text-[12px] font-bold text-black">ข้อความค้นหา</Fit>
            <div className="ml-[8px] h-[18px] w-[57px] border border-[#b0c4de] bg-white" />
            <div className="w-[3px]" />
            <div className="flex h-[11px] w-[18px] items-center justify-center border border-[#5a6b85] bg-[#f7f7f7]"><svg width="12" height="8" viewBox="0 0 12 8"><path d="M1 4l3.500 3L11 1" stroke="#000" strokeWidth="1.700" fill="none" /></svg></div>
            <div className="w-[8px]" /><Fit w={36} c="font-[Noto_Sans] text-[11px]">Auto</Fit><div className="w-[20px]" />
            <Fit w={54} c="font-[Noto_Sans] text-[11px] text-[#a9c0dd]">1 (1/1)</Fit><div className="w-[9px]" /><ZoomBtn c="h-[17px] w-[31px]" />
          </div>
          <div className="flex h-[13px] shrink-0 text-[12px]">
            <div className={`w-[53px] ${lineHead}`}><Fit w={32}>Line</Fit></div>
            <div className={`w-[64px] ${blueHead}`}><Fit w={27}>รหัส</Fit></div>
            <div className={`w-[96px] ${blueHead}`}><Fit w={18}>ชื่อ</Fit></div>
            <div className={`w-[63px] ${blueHead}`}><Fit w={56}>ชื่อ (ภาษ</Fit></div>
            <div className={`flex-1 ${blueHead}`}><Fit w={91}>รูปแบบเอกสา</Fit></div>
          </div>
          {[1, 2, 3, 4, 5, 6].map((n) => (
            <div key={n} className={`flex h-[13.100px] shrink-0 items-center text-[12px] text-black *:h-full *:flex *:shrink-0 *:items-center *:border-r *:border-[#dcdcdc] ${n % 2 ? 'bg-[#f0ffff]' : 'bg-white'}`}>
              <div className={`w-[53px] ${blueNum}`}><Fit w={n === 1 ? 7 : 10}>{n}</Fit></div>
              <div className="w-[64px] pl-[4px]">{n === 1 && <Fit w={24}>BS</Fit>}</div>
              <div className="w-[96px] pl-[3px]">{n === 1 && <Fit w={87}>บันทึกใบสั่ง..</Fit>}</div>
              <div className="w-[63px] pl-[3px]">{n === 1 && <Fit w={56}>Book ..</Fit>}</div>
              <div className="w-[97px] pl-[4px]">{n === 1 && <Fit w={89}>@YYMM#..</Fit>}</div>
            </div>
          ))}
        </div>
      </div>
    </div>
  );
}

function QuoteDialog() {
  const rows = ['22/11/256..', '24/11/256..'];
  const sums = ['4,151.60', '2,129.30'];
  return (
    <div className="absolute left-[1077px] top-[315px] flex h-[101px] w-[465px] flex-col border border-[#d0a850] bg-[#edc669] px-[5px] pb-[5px]">
      <div className="flex h-[25px] shrink-0 items-start">
        <div className="w-[4px]" /><div className="pt-[7px]"><Icon n="app" s={11} /></div>
        <div className="w-[168px]" />
        <div className="pt-[2px]"><Fit w={92} c="text-[14px] text-[#4b3f20]">เลขที่ใบเสนอราคา</Fit></div>
        <div className="ml-auto mr-[14px] mt-[11px] h-[2px] w-[7px] bg-[#4b3f20]" />
        <div className="mr-[7px] mt-[5px] h-[8px] w-[10px] border border-t-2 border-[#4b3f20]" />
        <div className="-mr-[4px] flex h-[18px] w-[40px] items-center justify-center bg-[#c75050]"><svg width="8" height="8" viewBox="0 0 8 8"><path d="M.8.8l6.400 6.400M7.200.8L.8 7.200" stroke="#fff" strokeWidth="1.700" /></svg></div>
      </div>
      <div className="flex min-h-0 flex-1 overflow-hidden bg-[#f3fffc]">
        <div className="flex w-[27px] shrink-0 flex-col items-center border-r border-[#6593cf] bg-[#f0f0f5] pt-[3px]">
          <Icon n="treeGray" s={13} />
          <div className="mt-[7px] h-[6px] w-[22px] border-y border-[#9cc0ee]" />
          <div className="mt-[3px]"><Icon n="check" s={13} /></div>
          <div className="mt-auto flex h-[10px] w-full items-center justify-end bg-linear-to-b from-[#dbe9fc] to-[#8cb4ec] pr-[5px]"><div className="h-[5px] w-[2px] bg-black" /><div className="border-y-[3px] border-l-[4px] border-y-transparent border-l-black" /></div>
        </div>
        <div className="flex flex-1 flex-col">
          <div className="flex h-[22px] shrink-0 items-center">
            <div className="w-[4px]" /><Fit w={67} c="text-[12px] font-bold text-black">ข้อความค้นหา</Fit>
            <div className="ml-[5px] h-[19px] w-[221px] border border-[#7aa7de] bg-[#fafad2]" />
            <div className="w-[2px]" /><Check on /><div className="w-[4px]" />
            <Fit w={24} c="font-[Noto_Sans] text-[11px]">Auto</Fit><div className="w-[12px]" />
            <Fit w={36} c="font-[Noto_Sans] text-[11px] text-[#a9c0dd]">2 (1/1)</Fit><div className="w-[6px]" /><ZoomBtn c="h-[19px] w-[20px]" />
          </div>
          <div className="flex h-[15px] shrink-0 text-[11px] text-black">
            <div className={`w-[35px] ${lineHead}`}><Fit w={21} c="text-[12px]">Line</Fit></div>
            <div className={`w-[63px] ${blueHead}`}><Fit w={52}>เอกสารวันที่</Fit></div>
            <div className={`w-[62px] ${blueHead}`}><Fit w={54}>เอกสารเลขที่</Fit></div>
            <div className={`w-[141px] ${blueHead}`}><Fit w={70}>รหัสลูกค้า/ลูกหนี้</Fit></div>
            <div className={`w-[63px] ${blueHead}`}><Fit w={43}>มูลค่าสุทธิ</Fit></div>
            <div className={`w-[62px] ${blueHead}`}><Fit w={46}>ผู้ขออนุมัติ</Fit></div>
          </div>
          {rows.map((r, i) => (
            <div key={r} className={`flex h-[15px] shrink-0 text-[12px] text-[#6a5acd] *:flex *:shrink-0 *:items-center *:border-r *:border-[#dcdcdc] ${i ? 'bg-white' : 'bg-[#f0ffff]'}`}>
              <div className={`w-[35px] text-black ${blueNum}`}><Fit w={6}>{i + 1}</Fit></div>
              <div className="w-[63px] pl-[2px]"><Fit w={57}>{r}</Fit></div>
              <div className="w-[62px] pl-[2px]"><Fit w={54}>QT17110..</Fit></div>
              <div className="w-[141px] pl-[2px]"><Fit w={97}>00-0000~ลูกค้าทั่วไป</Fit></div>
              <div className="w-[63px] justify-end pr-[4px]"><Fit w={45} a="r">{sums[i]}</Fit></div>
              <div className="w-[62px] pl-[2px]"><Fit w={54}>SUPERA..</Fit></div>
            </div>
          ))}
        </div>
      </div>
    </div>
  );
}

/* ---------- tutorial annotations ---------- */
const marks: [string, number, number, number, number, boolean?][] = [
  ['1', 141, 26, 18.5, 22, true], ['2', 373, 108, 18, 25.5], ['3', 52, 125.5, 18, 25.5], ['4', 620, 140.5, 18, 25.5],
  ['5', 1389.5, 105, 18, 25.5], ['6', 1188.5, 200, 18, 25.5], ['7', 621, 192.5, 18, 25.5], ['8', 585.5, 273, 18.5, 25.5],
  ['9', 653, 333.5, 18.5, 25.5], ['10', 901.5, 375, 26, 26], ['11', 642.5, 412, 25.5, 26], ['12', 872, 82, 25.5, 23, true],
];
const greens: [number, number, number, number, string?][] = [
  [162.5, 108.500, 191, 30.500, '#0b6b1b'], [1.500, 139.500, 35, 26.500, '#0b6b1b'], [868.500, 132.500, 87, 28, '#0b6b1b'], [867, 162.500, 90, 25.500, '#0b6b1b'],
  [1260, 129, 122, 36.500], [708.500, 265.500, 315, 20], [1201.500, 222.500, 386, 17], [779.500, 312.500, 216, 30], [1125.500, 376.500, 270, 17], [739.500, 396.500, 90, 26],
];
const arrows: [number, number, number, number][] = [
  [643, 146, 858, 145], [641, 185, 866, 183.5], [606, 275, 700, 275], [671, 329, 774, 329], [933, 376, 1114, 380.5], [668, 411, 737, 411],
];

function Annotations() {
  return (
    <svg className="pointer-events-none absolute left-0 top-0" width="1602" height="840" viewBox="0 0 1602 840">
      <defs>
        <filter id="sh" x="-20%" y="-20%" width="150%" height="160%"><feDropShadow dx="2" dy="4" stdDeviation="2.2" floodColor="#000" floodOpacity=".5" /></filter>
        <filter id="sl" filterUnits="userSpaceOnUse" x="0" y="0" width="1602" height="840"><feDropShadow dx="1" dy="3" stdDeviation="1.5" floodColor="#000" floodOpacity=".45" /></filter>
        <radialGradient id="gg"><stop offset="0" stopColor="#0a6f1c" /><stop offset="1" stopColor="#066117" /></radialGradient>
      </defs>
      <g filter="url(#sl)" fill="none" strokeWidth="3.200">
        {greens.map((g, i) => <rect key={i} x={g[0]} y={g[1]} width={g[2]} height={g[3]} stroke={g[4] || '#1fa032'} />)}
        <rect x="160.500" y="18.500" width="49" height="28" stroke="#fa4646" strokeWidth="2.600" />
        <rect x="736.500" y="105.500" width="126" height="33" stroke="#ee1717" />
      </g>
      <g filter="url(#sl)">
        {arrows.map(([x1, y1, x2, y2], i) => (
          <g key={i}>
            <path d={`M${x1} ${y1}L${x2 - 12} ${y2}`} stroke="#1fa032" strokeWidth="4" strokeDasharray="12 4.500" />
            <path d={`M${x2} ${y2}l-13 -6v12z`} fill="#1fa032" />
          </g>
        ))}
        <g stroke="#fa4646" strokeWidth="4.200" strokeDasharray="4 4" fill="none">
          <path d="M488 499V233L659 230" />
          <path d="M1300 426V500" />
        </g>
        <path d="M672 230l-12 -5.500v11zM488 510l-5.500 -11h11zM1300 511l-5.500 -12h11zM1300 415l-5.500 12h11z" fill="#fa4646" />
      </g>
      <g filter="url(#sh)">
        {marks.map((m) => <ellipse key={m[0]} cx={m[1]} cy={m[2]} rx={m[3]} ry={m[4]} fill={m[5] ? '#fc4345' : 'url(#gg)'} />)}
      </g>
      <g fill="#fff" fontFamily="Liberation Sans" fontSize="19" textAnchor="middle">
        {marks.map((m) => <text key={m[0]} x={m[1] - 1} y={m[2] + 5}>{m[0]}</text>)}
      </g>
      <path d="M248 131v13.500l3.300-3 2.200 5 2.300-1-2.200-5h4.400z" fill="#fff" stroke="#000" strokeWidth="1" />
      <path d="M900 590.500v15l3.500-3 2.500 5.500 2.500-1-2.500-5.500h4.800z" fill="#fff" stroke="#000" strokeWidth="1.100" />
    </svg>
  );
}

const note = 'absolute flex items-center border-[4px] border-[#1a9e2c] bg-white rounded-[14px/6px] text-[25px] font-bold text-[#fc4345] shadow-[2px_4px_4px_rgba(0,0,0,0.55)]';

export default function App() {
  return (
    <div className="relative flex h-[840px] w-[1602px] flex-col overflow-hidden bg-[#f0f8ff] font-['Liberation_Sans','Noto_Sans_Thai',sans-serif] text-black">
      <div className="h-[3px] shrink-0 bg-[#fbfbfb]" />
      <div className="flex h-[20px] shrink-0 items-center bg-[#edc669]">
        <div className="mb-[4px] ml-[4px] flex h-[13px] w-[13px] items-center justify-center rounded-full border border-[#35506f] bg-[#4a88c0]"><div className="h-[5px] w-[8px] rounded-full bg-[#a5cbe8]" /></div>
        <div className="w-[499px]" />
        <div className="flex pb-[2px]"><Fit w={568} c="font-['Open_Sans','Noto_Sans_Thai',sans-serif] text-[14px] text-[#40361c]">{'GAMEDATA สาขา 0001 : SML CM Version : 1.0.6480.36757  Build : 2017-09-28T20:25:14'}</Fit></div>
        <div className="ml-auto h-[2px] w-[8px] bg-[#40361c]" />
        <div className="mb-[5px] ml-[18px] mr-[15px]"><svg width="10" height="9" viewBox="0 0 10 9"><path d="M.7 2.500h6.500v5.500H.7zM3 2.500V.7h6v5H7.200" fill="none" stroke="#40361c" strokeWidth="1.300" /></svg></div>
        <div className="mr-[5px] flex h-[16px] w-[45px] items-center justify-center self-start bg-[#c75050]"><svg width="8" height="8" viewBox="0 0 8 8"><path d="M.8.8l6.400 6.400M7.200.8L.8 7.200" stroke="#fff" strokeWidth="1.600" /></svg></div>
      </div>
      <div className="flex h-[20px] shrink-0 items-center bg-[#bfdbff] pl-[10px] text-[13px] text-[#1c3f8c]">
        {menus.map(([t, slot, w]) => (
          <div key={t} className="flex shrink-0" style={{ width: slot }}><Fit w={w}>{t}</Fit></div>
        ))}
      </div>
      <div className="flex h-[25px] shrink-0 items-center border-b border-[#6593cf] bg-linear-to-b from-[#f3f4fb] from-45% to-[#cdd0ea] pl-[3px] text-[14px] text-[#1c3f8c]">
        <Icon n="clock" s={15} /><div className="w-[8px]" /><Icon n="layout" s={15} /><div className="w-[8px]" /><Icon n="calcBlue" s={15} /><div className="w-[7px]" />
        <Icon n="chart" s={15} /><div className="w-[4px]" /><Fit w={22}>MIS</Fit><div className="w-[10px]" /><Icon n="picture" s={15} /><div className="w-[5px]" /><Fit w={22}>102</Fit>
        <div className="w-[192px]" /><Fit w={194}>5 : Call Center Code=2188606776</Fit>
      </div>
      <div className="flex h-[24px] shrink-0 items-end pb-px pl-[2px] font-['Noto_Sans','Noto_Sans_Thai',sans-serif] text-[13px]">
        <div className="flex h-[20px] w-[44px] items-center justify-center border border-[#c0c0c0] bg-[#f2f2f2]"><Fit w={32}>Home</Fit></div>
        <div className="flex h-[20px] w-[41px] items-center border border-[#c0c0c0] bg-[#f2f2f2] pl-[5px]"><Fit w={24}>Main</Fit></div>
        <div className="flex h-[23px] w-[120px] items-center bg-white pl-[7px] pb-[2px]"><Fit w={98}>ใบสั่งซื้อ/สั่งจอง</Fit></div>
      </div>
      <div className="flex h-[737px] shrink-0 bg-[#f0f0f0] pl-[4px] pr-[5px]">
        <LeftPanel />
        <div className="w-[5px] border-x border-[#b5b5b5] bg-[#d8d8d8]" />
        <RightPanel />
      </div>
      <div className="mt-[2px] h-px shrink-0 bg-[#a9a9a9]" />
      <div className="mt-[2px] flex-1 bg-[#51576f]" />

      <div className="absolute left-[160px] top-[23px] h-[21px] w-[50px] border border-b-0 border-[#a9a9a9] bg-linear-to-b from-white to-[#e9ecf5]">
        <div className="flex pl-[7px] pt-[1px] text-[13px] text-[#1c3f8c]"><Fit w={28}>4.ขาย</Fit></div>
      </div>
      <DropMenu />
      <CustomerDialog />
      <DocNoDialog />
      <QuoteDialog />
      <div className="absolute left-[785px] top-[318px] flex h-[22px] w-[202px] border border-[#5c8fd0] bg-[#fafad2]">
        <div className="ml-[2px] mt-[2px] h-[16px] w-px bg-black" />
        <div className="ml-auto flex w-[18px] items-center justify-center border-l border-[#7b9fc9] bg-[#eef3fa]"><Icon n="lens" /></div>
      </div>
      <div className={`${note} left-[379px] top-[508px] h-[85px] w-[322px] pb-[3px] pl-[14px]`}><Fit w={281}>สร้างรหัสลูกหนี้ เมนู 7.1.1</Fit></div>
      <div className={`${note} left-[1083px] top-[512px] h-[85px] w-[420px] pb-[2px] pl-[19px]`}><Fit w={373}>สร้างเอกสาร เมนู 4.1 ใบเสนอราคา</Fit></div>
      <div className="absolute left-[493px] top-[600px] flex text-[28px] font-bold text-[#00ae92] [text-shadow:2px_-2px_3px_rgba(0,0,0,0.4)]"><Fit w={31}>12</Fit></div>
      <div className="absolute left-[588px] top-[623px] flex text-[28px] font-bold text-[#fc4345] [text-shadow:2px_1px_3px_rgba(0,0,0,0.4)]"><Fit w={31}>12</Fit></div>
      <div className="absolute left-[213px] top-[27px] flex text-[22px] font-bold text-[#fc4345] [text-shadow:0px_-4px_3px_rgba(0,0,0,0.4)]"><Fit w={54}>Start</Fit></div>
      <div className="absolute left-[905px] top-[76px] flex text-[24px] font-bold text-[#fc4345] [text-shadow:0px_-4px_3px_rgba(0,0,0,0.4)]"><Fit w={46}>End</Fit></div>
      <Annotations />
    </div>
  );
}
